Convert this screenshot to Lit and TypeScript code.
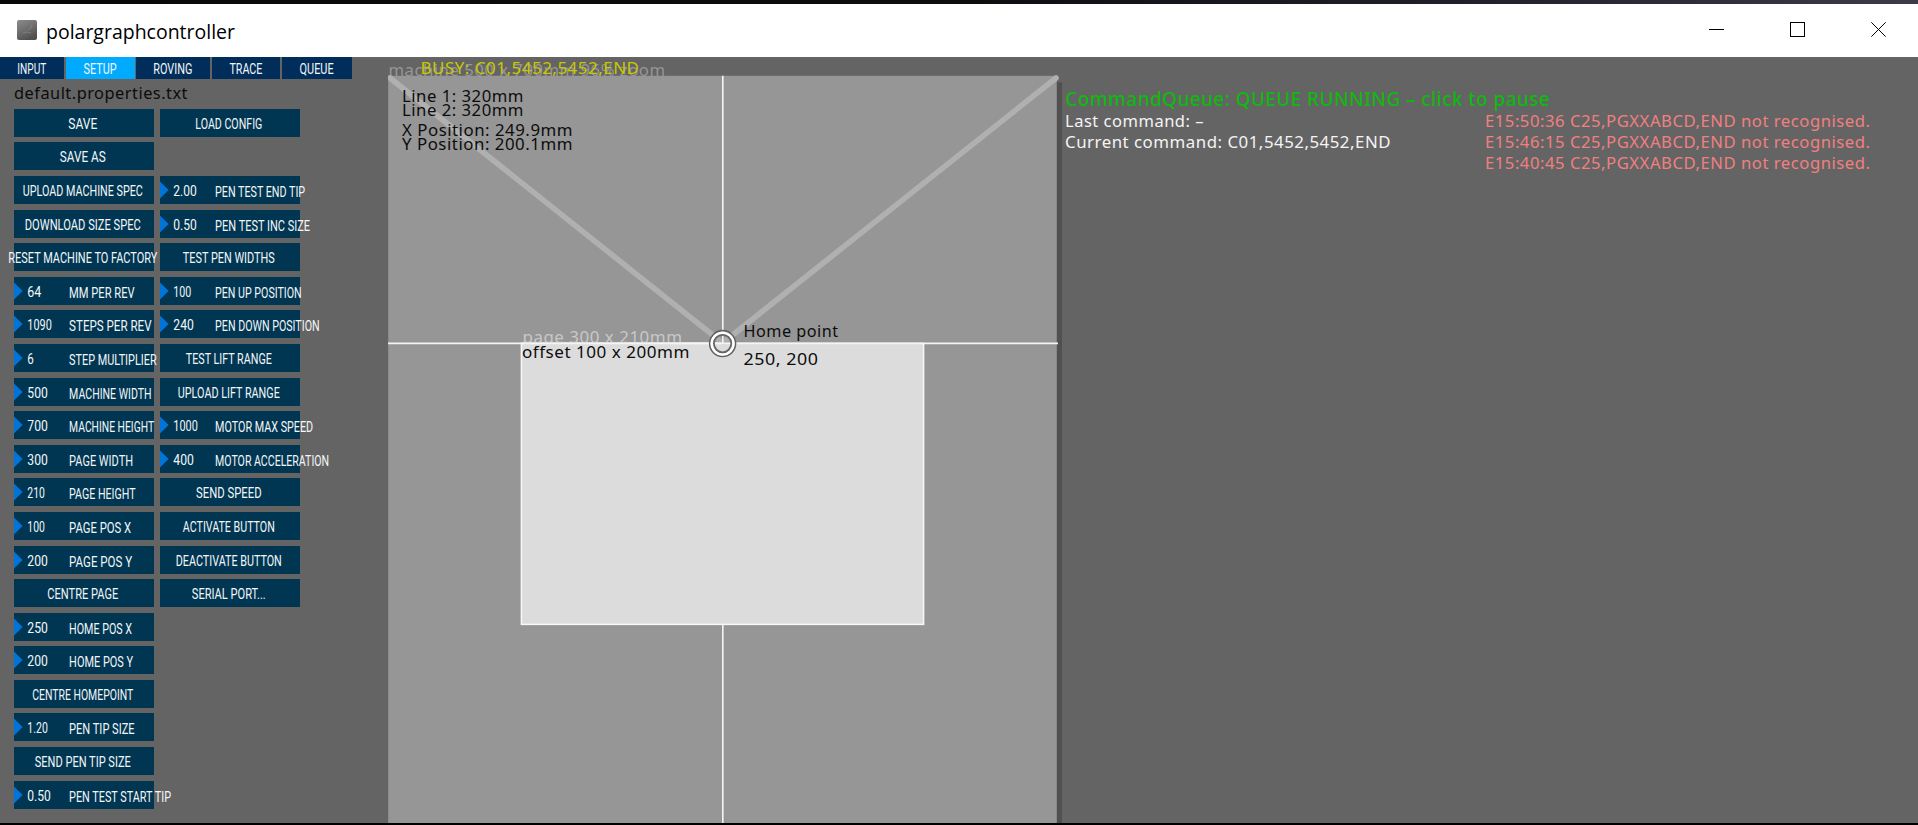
import { LitElement, html, svg, css } from "lit";
import { customElement, property } from "lit/decorators.js";

type Cell =
  | { kind: "button"; label: string; w: number }
  | { kind: "number"; label: string; w: number; value: string; vw: number }
  | null;

const b = (label: string, w: number): Cell => ({ kind: "button", label, w });
const n = (value: string, vw: number, label: string, w: number): Cell => ({ kind: "number", label, w, value, vw });

// Control rows, [left column, right column]
const ROWS: [Cell, Cell][] = [
  [b("SAVE", 29), b("LOAD CONFIG", 67)],
  [b("SAVE AS", 46), null],
  [b("UPLOAD MACHINE SPEC", 120), n("2.00", 23.5, "PEN TEST END TIP", 90)],
  [b("DOWNLOAD SIZE SPEC", 116), n("0.50", 23.5, "PEN TEST INC SIZE", 95)],
  [b("RESET MACHINE TO FACTORY", 149), b("TEST PEN WIDTHS", 92)],
  [n("64", 14, "MM PER REV", 65.5), n("100", 18, "PEN UP POSITION", 86.5)],
  [n("1090", 24.5, "STEPS PER REV", 82.5), n("240", 20.5, "PEN DOWN POSITION", 104.5)],
  [n("6", 6.5, "STEP MULTIPLIER", 87.5), b("TEST LIFT RANGE", 86)],
  [n("500", 20.5, "MACHINE WIDTH", 82.5), b("UPLOAD LIFT RANGE", 102)],
  [n("700", 20.5, "MACHINE HEIGHT", 85), n("1000", 24.5, "MOTOR MAX SPEED", 98)],
  [n("300", 20.5, "PAGE WIDTH", 64), n("400", 20.5, "MOTOR ACCELERATION", 114)],
  [n("210", 17.5, "PAGE HEIGHT", 66.5), b("SEND SPEED", 65.5)],
  [n("100", 17.5, "PAGE POS X", 62), b("ACTIVATE BUTTON", 92)],
  [n("200", 20.5, "PAGE POS Y", 63), b("DEACTIVATE BUTTON", 106)],
  [b("CENTRE PAGE", 71), b("SERIAL PORT...", 74)],
  [n("250", 20.5, "HOME POS X", 63), null],
  [n("200", 20.5, "HOME POS Y", 64), null],
  [b("CENTRE HOMEPOINT", 101), null],
  [n("1.20", 20.5, "PEN TIP SIZE", 65.5), null],
  [b("SEND PEN TIP SIZE", 96), null],
  [n("0.50", 23.5, "PEN TEST START TIP", 102), null],
];

const fitted = (x: number, y: number, w: number, label: string) =>
  svg`<text x=${x} y=${y} textLength=${w} lengthAdjust="spacingAndGlyphs">${label}</text>`;

@customElement("pg-control")
class PgControl extends LitElement {
  @property({ attribute: false }) cell: Cell = null;
  static styles = css`
    :host { display: block; width: 140px; height: 28px; }
    svg { display: block; overflow: visible; }
    .box { fill: #003652; }
    .arrow { fill: #0074d9; }
    text { font: 400 14.6px Roboto, sans-serif; fill: #f4f7f9; white-space: pre; }
  `;
  render() {
    const c = this.cell;
    if (!c) return html``;
    return html`<svg width="140" height="28" viewBox="0 0 140 28">
      <rect class="box" width="140" height="28"></rect>
      ${c.kind === "button"
        ? fitted(68.8 - c.w / 2, 20.4, c.w, c.label)
        : svg`<path class="arrow" d="M0 5.4 L8.6 14 L0 22.6Z"></path>
            ${fitted(13.3, 19.8, c.vw, c.value)}
            ${fitted(55.1, 21.4, c.w, c.label)}`}
    </svg>`;
  }
}

const TABS = [
  { label: "INPUT", w: 64.4, t: 29 },
  { label: "SETUP", w: 69, t: 33, on: true },
  { label: "ROVING", w: 74.4, t: 39 },
  { label: "TRACE", w: 68.6, t: 33 },
  { label: "QUEUE", w: 70, t: 34 },
];

@customElement("pg-tabs")
class PgTabs extends LitElement {
  static styles = css`
    :host { display: flex; gap: 1.3px; height: 22.4px; }
    .tab { background: #002d5a; height: 22.4px; }
    .on { background: #00aaff; }
    svg { display: block; }
    text { font: 400 14.6px Roboto, sans-serif; fill: #f4f7f9; }
  `;
  render() {
    return TABS.map(
      (t) => html`<div class="tab ${t.on ? "on" : ""}">
        <svg width=${t.w} height="22.4">${fitted((t.w - t.t) / 2 - 0.4, 17.2, t.t, t.label)}</svg>
      </div>`
    );
  }
}

const line = (x: number, y: number, w: number, cls: string, label: string) =>
  svg`<text class=${cls} x=${x} y=${y} textLength=${w} lengthAdjust="spacingAndGlyphs">${label}</text>`;

@customElement("pg-machine")
class PgMachine extends LitElement {
  static styles = css`
    :host { display: block; width: 675px; height: 766px; }
    svg { display: block; }
    text { font: 16.6px "Noto Sans", "Open Sans", sans-serif; letter-spacing: 0.5px; white-space: pre; }
    .dark { fill: #0c0c0c; }
    .faint { fill: #969696; }
    .pale { fill: #c8c8c8; }
    .busy { fill: #c8c800; }
    .cord { stroke: #b0b0b0; stroke-width: 5.6; stroke-linecap: round; fill: none; }
    .guide { stroke: #f4f4f4; stroke-width: 1.6; }
  `;
  render() {
    return html`<svg width="675" height="766" viewBox="388 57 675 766">
      <rect x="395" y="82.4" width="667" height="741" fill="#505050"></rect>
      ${line(388.5, 76, 277, "faint", "machine 500 x 700mm 96% zoom")}
      <rect x="388.2" y="75.8" width="668.6" height="748" fill="#969696"></rect>
      <rect x="521.4" y="343.4" width="402.2" height="281" fill="#dcdcdc" stroke="#f8f8f8" stroke-width="1.5"></rect>
      <path class="cord" d="M390 78L722.6 343L1056 78"></path>
      <rect x="523" y="344.2" width="399" height="12" fill="#dcdcdc"></rect>
      <path class="guide" d="M722.8 75.8V344M722.8 625V823M388 343.4H1058"></path>
      ${line(522.5, 343, 160, "pale", "page 300 x 210mm")}
      <rect x="523" y="344.2" width="150" height="4" fill="#dcdcdc"></rect>
      <path class="guide" d="M521 343.4H722"></path>
      ${line(522, 358, 168, "dark", "offset 100 x 200mm")}
      <circle cx="722.6" cy="343.6" r="12.8" fill="none" stroke="#606060" stroke-width="1.9"></circle>
      <circle cx="722.6" cy="343.6" r="10.8" fill="none" stroke="#fff" stroke-width="2.8"></circle>
      <circle cx="722.6" cy="343.6" r="8.7" fill="none" stroke="#646464" stroke-width="1.8"></circle>
      ${line(743.5, 337, 95, "dark", "Home point")}
      ${line(743.5, 365, 75, "dark", "250, 200")}
      ${line(402, 102, 122, "dark", "Line 1: 320mm")}
      ${line(402, 116, 122, "dark", "Line 2: 320mm")}
      ${line(402, 135.5, 171, "dark", "X Position: 249.9mm")}
      ${line(402, 149.5, 171, "dark", "Y Position: 200.1mm")}
      ${line(420.5, 74, 219, "busy", "BUSY: C01,5452,5452,END")}
    </svg>`;
  }
}

@customElement("pg-queue")
class PgQueue extends LitElement {
  static styles = css`
    :host { display: block; width: 853px; height: 120px; }
    svg { display: block; }
    text { font: 16.6px "Noto Sans", "Open Sans", sans-serif; letter-spacing: 0.5px; white-space: pre; }
    .title { font-size: 19.6px; font-weight: 500; fill: #0fb90f; }
    .plain { fill: #f4f4f4; }
    .error { fill: #f08080; }
  `;
  render() {
    const errors = ["E15:50:36", "E15:46:15", "E15:40:45"];
    return html`<svg width="853" height="120" viewBox="1065 57 853 120">
      ${line(1065.2, 106, 485, "title", "CommandQueue: QUEUE RUNNING – click to pause")}
      ${line(1065, 127.3, 139, "plain", "Last command: –")}
      ${line(1065, 148, 326, "plain", "Current command: C01,5452,5452,END")}
      ${errors.map((e, i) => line(1485, 127.2 + i * 21, 385.5, "error", `${e} C25,PGXXABCD,END not recognised.`))}
    </svg>`;
  }
}

@customElement("app-root")
class AppRoot extends LitElement {
  static styles = css`
    :host { display: flex; flex-direction: column; width: 1918px; height: 825px; overflow: hidden; background: #646464; }
    .desktop { height: 4px; flex: none; background: linear-gradient(90deg, #08080a, #0d0d10 50%, #24232e 80%, #3c3b4a); }
    .bar { height: 53px; flex: none; background: #fff; display: flex; align-items: center; }
    .icon { margin-left: 17px; margin-top: -1px; display: block; }
    .name { margin-left: 9px; flex: 1; display: block; }
    .name text { font: 20.5px "Open Sans", "Noto Sans", sans-serif; fill: #000; }
    .buttons { display: flex; gap: 66px; margin-right: 32px; margin-top: -2px; }
    .buttons svg { display: block; fill: none; stroke: #000; stroke-width: 1; }
    .body { flex: 1; display: flex; min-height: 0; }
    .panel { width: 388px; flex: none; box-sizing: border-box; }
    .file { display: block; margin-left: 14px; }
    .file text { font: 16.8px "Noto Sans", sans-serif; letter-spacing: 0.5px; fill: #0c0c0c; }
    .grid { display: grid; grid-template-columns: 140px 140px; grid-auto-rows: 28px; gap: 5.6px; margin-left: 14px; }
    .foot { height: 2px; flex: none; background: #000; }
    pg-machine { flex: none; }
    pg-queue { margin-left: 2px; flex: none; }
  `;
  render() {
    return html`
      <div class="desktop"></div>
      <div class="bar">
        <svg class="icon" width="20" height="20">
          <defs>
            <linearGradient id="g" x1="0" y1="0" x2="0.5" y2="1">
              <stop offset="0" stop-color="#8c8c8c"></stop>
              <stop offset="0.45" stop-color="#747474"></stop>
              <stop offset="1" stop-color="#505050"></stop>
            </linearGradient>
          </defs>
          <rect width="20" height="20" rx="2" fill="url(#g)"></rect>
          <path d="M11 10l3-2 1-3M6 13l4-1 4 1" stroke="#a0a0a0" stroke-width="1" fill="none" opacity="0.45"></path>
        </svg>
        <svg class="name" height="36"><text x="0" y="26" textLength="189" lengthAdjust="spacingAndGlyphs">polargraphcontroller</text></svg>
        <div class="buttons">
          <svg width="15" height="15"><path d="M0 7.5H15"></path></svg>
          <svg width="15" height="15"><rect x="0.5" y="0.5" width="14" height="14"></rect></svg>
          <svg width="15" height="15"><path d="M0.3 0.3L14.7 14.7M14.7 0.3L0.3 14.7"></path></svg>
        </div>
      </div>
      <div class="body">
        <div class="panel">
          <pg-tabs></pg-tabs>
          <svg class="file" width="200" height="29.4">
            <text x="0" y="19.6" textLength="174" lengthAdjust="spacingAndGlyphs">default.properties.txt</text>
          </svg>
          <div class="grid">
            ${ROWS.flat().map((c) => html`<pg-control .cell=${c}></pg-control>`)}
          </div>
        </div>
        <pg-machine></pg-machine>
        <pg-queue></pg-queue>
      </div>
      <div class="foot"></div>
    `;
  }
}
